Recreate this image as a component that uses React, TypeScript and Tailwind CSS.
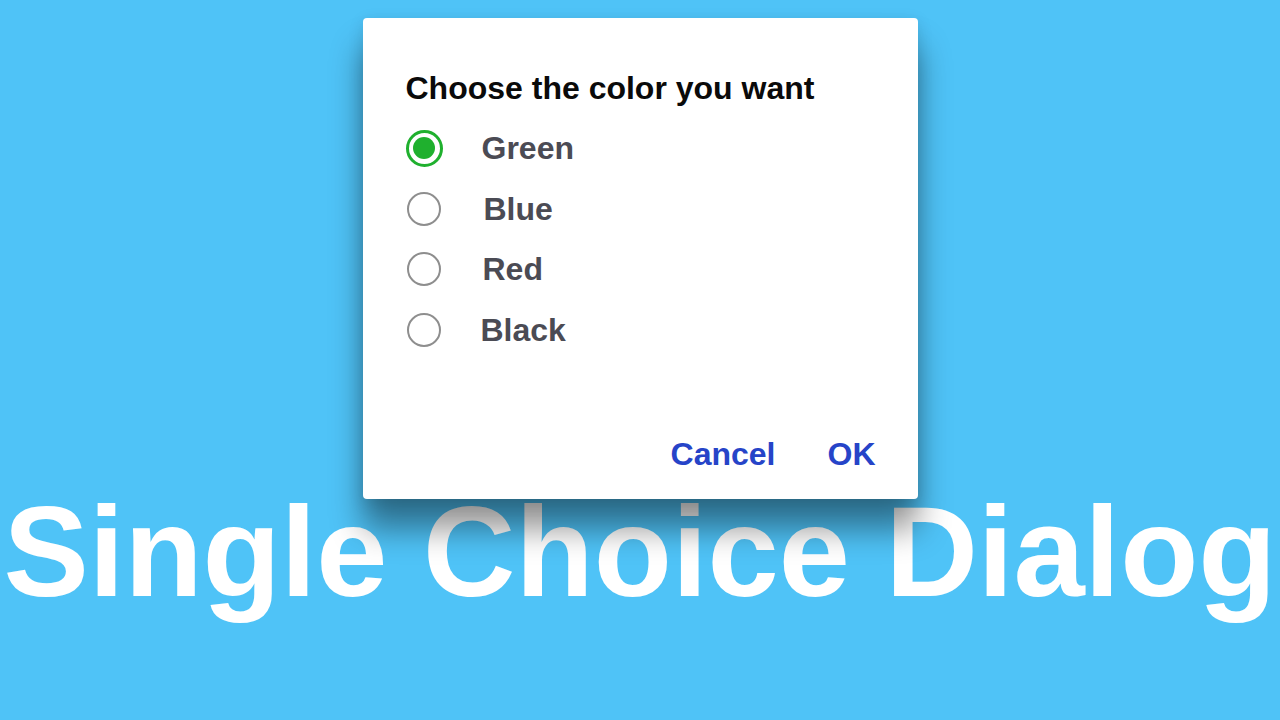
import React from "react";

const options = ["Green", "Blue", "Red", "Black"];

export default function App() {
  const font = { fontFamily: '"Liberation Sans", Arial, sans-serif' };
  return (
    <div
      className="w-full h-[720px] bg-[#4fc3f7] flex flex-col items-center overflow-hidden"
      style={font}
    >
      <div className="relative z-10 mt-[18px] w-[555px] h-[481px] shrink-0 bg-white rounded-[4px] shadow-[0_30px_32px_rgba(0,0,0,0.42),0_4px_16px_rgba(0,0,0,0.12)] flex flex-col pl-[43px] pr-[42px] pt-[50px] pb-[25px]">
        <div className="h-[40px] leading-[40px] text-[32px] font-bold text-[#0a0a0a] whitespace-nowrap">
          Choose the color you want
        </div>
        <div className="mt-[10px] flex flex-col">
          {options.map((o, i) => (
            <div key={o} className="h-[60.5px] flex items-center">
              <div className="w-[76px] flex items-center">
                {i === 0 ? (
                  <div className="w-[37px] h-[37px] rounded-full border-[3.5px] border-[#1fb02e] flex items-center justify-center">
                    <div className="w-[22px] h-[22px] rounded-full bg-[#1fb02e]" />
                  </div>
                ) : (
                  <div className="ml-[1px] w-[34px] h-[34px] rounded-full border-[2.5px] border-[#8e8e8e]" />
                )}
              </div>
              <span
                className={
                  "text-[32px] leading-[40px] font-bold text-[#4b4b54] " +
                  (i === 1 ? "ml-[2px]" : i === 2 ? "ml-[1px]" : i === 3 ? "-ml-[1px]" : "")
                }
              >
                {o}
              </span>
            </div>
          ))}
        </div>
        <div className="mt-auto h-[40px] flex items-center justify-end gap-[52px] text-[32px] leading-[40px] font-bold text-[#2644c8]">
          <span>Cancel</span>
          <span>OK</span>
        </div>
      </div>
      <div className="mt-[3px] text-[128px] leading-[100px] font-bold text-white whitespace-nowrap">
        Single Choice Dialog
      </div>
    </div>
  );
}
